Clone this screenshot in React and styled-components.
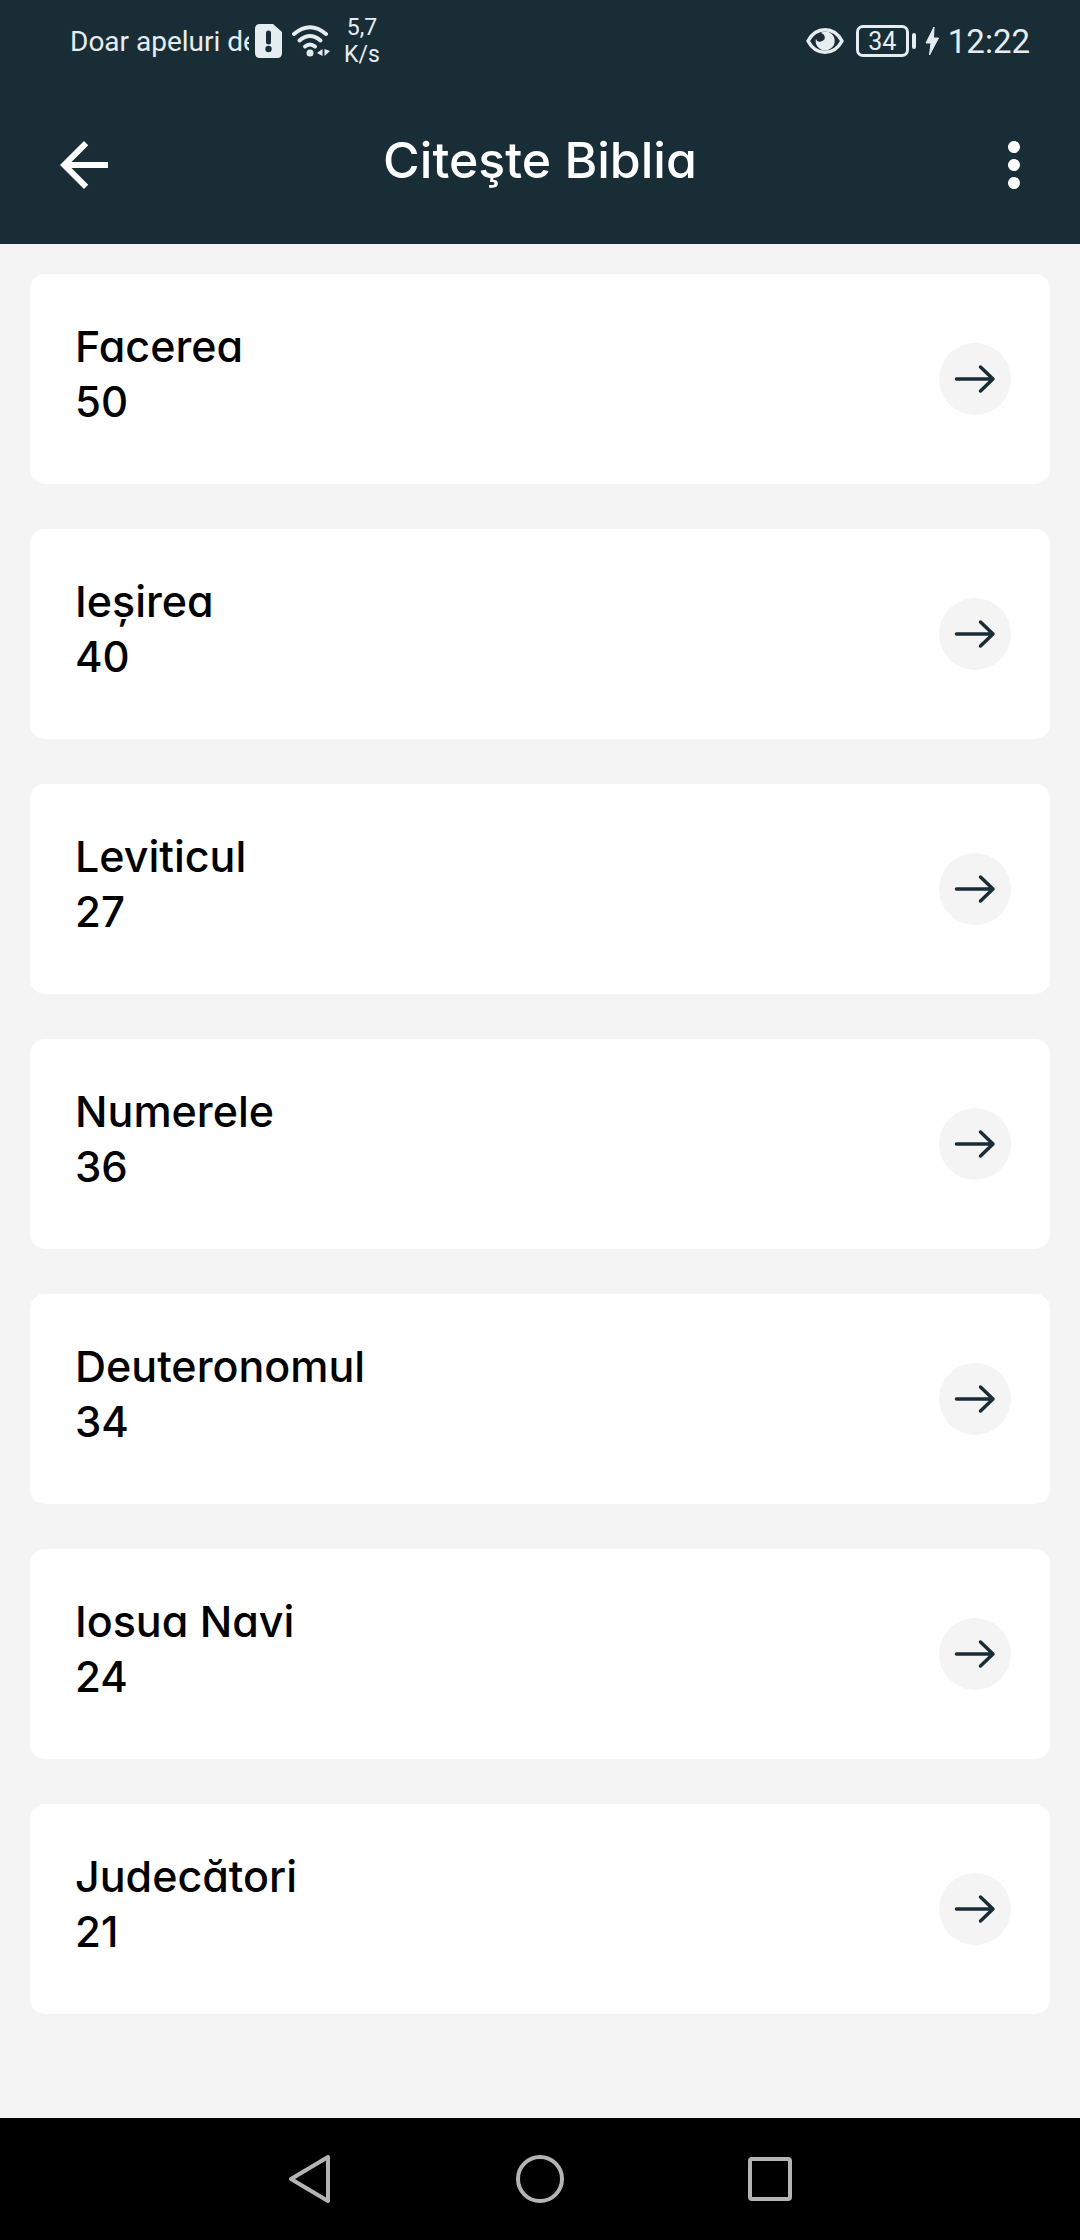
import React from 'react'
import styled, { createGlobalStyle } from 'styled-components'
import { MdArrowBack, MdMoreVert } from 'react-icons/md'

const GlobalStyle = createGlobalStyle`
    * { box-sizing:border-box; }
    body {
        margin:0;
        background-color:#f4f4f4;
        font-family:Inter, "Noto Sans", sans-serif;
        font-feature-settings:"cv11";
    }
    button {
        padding:0;
        border:0;
        background:none;
        color:inherit;
        font:inherit;
        cursor:pointer;
    }
    svg { display:block; flex:none; }
`;

const Screen = styled.div`
    display:flex;
    flex-direction:column;
    min-height:100vh;
`;

const Header = styled.header`
    background-color:#192d37;
    color:#fff;
`;

const StatusBar = styled.div`
    display:flex;
    align-items:center;
    justify-content:space-between;
    height:82px;
    padding:0 50px 0 70px;
    color:#e6edf0;
    font-family:Roboto, sans-serif;
`;

const StatusGroup = styled.div`
    display:flex;
    align-items:center;
    gap:${props => props.$gap}px;
`;

const Carrier = styled.span`
    width:179px;
    padding-top:2px;
    overflow:hidden;
    white-space:nowrap;
    font-size:28px;
    line-height:40px;
`;

const Speed = styled.span`
    padding-left:4px;
    font-size:23px;
    line-height:27px;
    text-align:center;
`;

const Clock = styled.span`
    padding-top:2px;
    font-size:33px;
    line-height:40px;
`;

const AppBar = styled.div`
    display:grid;
    grid-template-columns:90px 1fr 90px;
    align-items:center;
    height:162px;
    padding:4px 30px 0;
`;

const IconButton = styled.button`
    justify-self:end;
    width:72px;
    height:72px;
`;

const Title = styled.h1`
    margin:0;
    padding-bottom:10px;
    font-size:50px;
    font-weight:500;
    line-height:64px;
    text-align:center;
`;

const BookList = styled.ul`
    display:flex;
    flex:1;
    flex-direction:column;
    gap:45px;
    margin:0;
    padding:30px;
    list-style:none;
`;

const BookCard = styled.li`
    display:flex;
    align-items:center;
    justify-content:space-between;
    height:210px;
    padding:0 39px 0 45px;
    border-radius:15px;
    background-color:#fff;
    color:#000;
`;

const BookText = styled.div`
    padding-bottom:10px;
    font-weight:500;
    line-height:55px;
`;

const BookName = styled.div`
    font-size:43px;
`;

const Chapters = styled.div`
    font-size:42px;
`;

const OpenButton = styled.button`
    display:flex;
    align-items:center;
    justify-content:center;
    width:72px;
    height:72px;
    && {
        border-radius:50%;
        background-color:#f4f4f4;
    }
`;

const NavBar = styled.nav`
    display:flex;
    align-items:center;
    justify-content:center;
    gap:158px;
    height:122px;
    background-color:#000;
`;

const NavButton = styled.button`
    display:flex;
    align-items:center;
    justify-content:center;
    width:72px;
    height:72px;
`;

const books = [
    { name: 'Facerea', chapters: 50 },
    { name: 'Ieșirea', chapters: 40 },
    { name: 'Leviticul', chapters: 27 },
    { name: 'Numerele', chapters: 36 },
    { name: 'Deuteronomul', chapters: 34 },
    { name: 'Iosua Navi', chapters: 24 },
    { name: 'Judecători', chapters: 21 },
]

const SimIcon = () => (
    <svg width="27" height="34" viewBox="0 0 27 34">
        <path fill="#e6edf0" d="M5 0H18L27 8V29Q27 34 22 34H5Q0 34 0 29V5Q0 0 5 0Z" />
        <path stroke="#192d37" strokeWidth="5" strokeLinecap="round" d="M13.500 9V18" />
        <circle cx="13.500" cy="25" r="3.200" fill="#192d37" />
    </svg>
)

const WifiIcon = () => (
    <svg width="38" height="32" viewBox="0 0 38 32" fill="none" stroke="#e6edf0" strokeWidth="4" strokeLinecap="round">
        <path d="M2 9Q18 -4.500 34 9" />
        <path d="M7.500 15.500Q18 6.500 28.500 15.500" />
        <path d="M13 21.500Q18 17.500 23 21.500" />
        <circle cx="18" cy="28" r="3.500" fill="#e6edf0" stroke="none" />
        <path d="M30.500 24V31L25 28ZM32.500 24V31L38 26Z" fill="#e6edf0" stroke="none" />
    </svg>
)

const EyeIcon = () => (
    <svg width="38" height="28" viewBox="0 0 38 28">
        <path fill="none" stroke="#e6edf0" strokeWidth="3.500" strokeLinejoin="round" d="M2 14C10 -1 28 -1 36 14C28 29 10 29 2 14Z" />
        <path fill="#e6edf0" d="M18 4.500A9.500 9.500 0 1 1 10 11.500Q11 15.500 15 14.500Q20 13 18.500 9Q18 7 15 6Q16 5 18 4.500Z" />
    </svg>
)

const Battery = styled.span`
    display:flex;
    align-items:center;
    gap:3px;
    &::after {
        content:"";
        width:4px;
        height:16px;
        border-radius:2px;
        background-color:#e6edf0;
    }
`;

const BatteryLevel = styled.span`
    width:53px;
    height:32px;
    border:3px solid #e6edf0;
    border-radius:7px;
    font-size:25px;
    line-height:27px;
    text-align:center;
`;

const BoltIcon = () => (
    <svg width="14" height="30" viewBox="0 0 14 30">
        <path fill="#e6edf0" stroke="#e6edf0" strokeLinejoin="round" d="M9 1L1 17H6L4.500 29L13.500 12H8.500Z" />
    </svg>
)

const ArrowIcon = () => (
    <svg width="42" height="30" viewBox="0 0 42 30" fill="none" stroke="#192d37" strokeWidth="3.500" strokeLinecap="round" strokeLinejoin="round">
        <path d="M2.500 15H39M26.500 3L39 15L26.500 27" />
    </svg>
)

class BookRow extends React.Component {
    render() {
        const { book } = this.props;
        return (
            <BookCard>
                <BookText>
                    <BookName>{book.name}</BookName>
                    <Chapters>{book.chapters}</Chapters>
                </BookText>
                <OpenButton aria-label={book.name}><ArrowIcon /></OpenButton>
            </BookCard>
        )
    }
}

class App extends React.Component {
    render() {
        return (
            <Screen>
                <GlobalStyle />
                <Header>
                    <StatusBar>
                        <StatusGroup $gap={10}>
                            <StatusGroup $gap={6}>
                                <Carrier>Doar apeluri de</Carrier>
                                <SimIcon />
                            </StatusGroup>
                            <WifiIcon />
                            <Speed>5,7<br />K/s</Speed>
                        </StatusGroup>
                        <StatusGroup $gap={9}>
                            <StatusGroup $gap={12}>
                                <EyeIcon />
                                <Battery><BatteryLevel>34</BatteryLevel></Battery>
                            </StatusGroup>
                            <BoltIcon />
                            <Clock>12:22</Clock>
                        </StatusGroup>
                    </StatusBar>
                    <AppBar>
                        <IconButton aria-label="Înapoi"><MdArrowBack size={72} /></IconButton>
                        <Title>Citeşte Biblia</Title>
                        <IconButton aria-label="Meniu"><MdMoreVert size={72} /></IconButton>
                    </AppBar>
                </Header>
                <BookList>
                    {books.map(book => <BookRow key={book.name} book={book} />)}
                </BookList>
                <NavBar>
                    <NavButton aria-label="Înapoi">
                        <svg width="44" height="50" viewBox="0 0 44 50" fill="none" stroke="#b4b4b4" strokeWidth="4" strokeLinejoin="round">
                            <path d="M40 3V47L3 25Z" />
                        </svg>
                    </NavButton>
                    <NavButton aria-label="Acasă">
                        <svg width="48" height="48" viewBox="0 0 48 48" fill="none" stroke="#b4b4b4" strokeWidth="4">
                            <circle cx="24" cy="24" r="22" />
                        </svg>
                    </NavButton>
                    <NavButton aria-label="Recente">
                        <svg width="44" height="44" viewBox="0 0 44 44" fill="none" stroke="#b4b4b4" strokeWidth="4">
                            <rect x="2" y="2" width="40" height="40" rx="2" />
                        </svg>
                    </NavButton>
                </NavBar>
            </Screen>
        )
    }
}

export default App;
